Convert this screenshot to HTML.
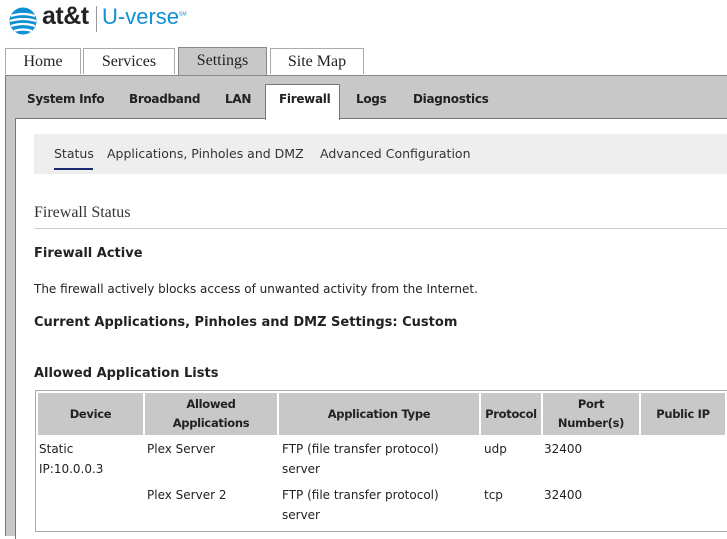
<!DOCTYPE html>
<html><head><style>
body{margin:0;width:727px;height:532px;overflow:hidden;background:#fff;font-family:"DejaVu Sans","Liberation Sans",sans-serif;position:relative;color:#222}
.a{position:absolute}
.tab{position:absolute;top:48px;height:26px;border:1px solid #aaa;border-bottom:none;background:#fff;font-family:"Liberation Serif",serif;font-size:16px;text-align:center;line-height:26px;color:#222;box-sizing:border-box}
.st{position:absolute;top:92px;font-size:12px;font-weight:bold;color:#222;letter-spacing:-0.3px}
.b{font-size:13px;font-weight:bold;color:#222}
td,th{font-size:12px;text-align:left;vertical-align:top;padding:0 0 0 2px;line-height:20px;overflow:hidden}
th{text-align:center;vertical-align:middle;background:#c8c8c8;font-weight:bold;border-right:2px solid #fff;line-height:19px;padding:0;font-size:11.5px;letter-spacing:-0.3px}
</style></head><body>
<svg class="a" style="left:8px;top:6px" width="30" height="30" viewBox="0 0 30 30"><circle cx="15" cy="15" r="13.5" fill="#0f8fd4"/><g stroke="#fff" stroke-width="2.2" fill="none"><path d="M3 10q12-4 24 0M2 15q13-4 26 0M3 20q12-4 24 0M6 25q9-3 18 0"/></g></svg>
<div class="a" style="left:42px;top:2px;font-size:25px;font-weight:bold;color:#222;font-family:'Liberation Sans',sans-serif;letter-spacing:-0.5px">at&amp;t</div>
<div class="a" style="left:96px;top:6px;width:1px;height:26px;background:#999"></div>
<div class="a" style="left:102px;top:4px;font-size:22px;color:#0f8fd4;font-family:'Liberation Sans',sans-serif">U-verse<sup style="font-size:5px">SM</sup></div>
<div class="tab" style="left:5px;width:76px">Home</div>
<div class="tab" style="left:83px;width:92px">Services</div>
<div class="tab" style="left:178px;width:89px;top:47px;height:29px;background:#c8c8c8;border-color:#888">Settings</div>
<div class="tab" style="left:270px;width:94px">Site Map</div>
<div class="a" style="left:5px;top:75px;width:722px;height:460px;background:#c8c8c8;border-left:1px solid #777;border-top:1px solid #888"></div>
<div class="a" style="left:15px;top:118px;width:712px;height:420px;background:#fff;border-left:1px solid #777;border-top:1px solid #777"></div>
<div class="a" style="left:265px;top:84px;width:75px;height:36px;background:#fff;border:1px solid #777;border-bottom:none;box-sizing:border-box"></div>
<div class="st" style="left:27px">System Info</div>
<div class="st" style="left:129px">Broadband</div>
<div class="st" style="left:225px">LAN</div>
<div class="st" style="left:279px">Firewall</div>
<div class="st" style="left:356px">Logs</div>
<div class="st" style="left:413px">Diagnostics</div>
<div class="a" style="left:34px;top:134px;width:693px;height:40px;background:#eee"></div>
<div class="a" style="left:54px;top:146px;font-size:12.5px;color:#333">Status</div>
<div class="a" style="left:54px;top:168px;width:39px;height:2px;background:#1a2a6c"></div>
<div class="a" style="left:107px;top:146px;font-size:12.5px;color:#333">Applications, Pinholes and DMZ</div>
<div class="a" style="left:320px;top:146px;font-size:12.5px;color:#333">Advanced Configuration</div>
<div class="a" style="left:34px;top:204px;font-family:'Liberation Serif',serif;font-size:16px;color:#333">Firewall Status</div>
<div class="a" style="left:34px;top:228px;width:693px;height:1px;background:#ccc"></div>
<div class="a b" style="left:34px;top:246px">Firewall Active</div>
<div class="a" style="left:34px;top:282px;font-size:12px">The firewall actively blocks access of unwanted activity from the Internet.</div>
<div class="a b" style="left:34px;top:315px">Current Applications, Pinholes and DMZ Settings: Custom</div>
<div class="a b" style="left:34px;top:366px">Allowed Application Lists</div>
<div class="a" style="left:35px;top:390px;width:700px;height:142px;border:1px solid #aaa;box-sizing:border-box"></div>
<table class="a" style="left:38px;top:393px;border-collapse:collapse;width:689px;table-layout:fixed">
<tr style="height:42px"><th style="width:105px">Device</th><th style="width:132px">Allowed<br>Applications</th><th style="width:200px">Application Type</th><th style="width:60px">Protocol</th><th style="width:96px">Port<br>Number(s)</th><th>Public IP</th></tr>
<tr style="height:46px"><td style="padding-top:4px;padding-left:1px">Static<br>IP:10.0.0.3</td><td style="padding-top:4px;padding-left:3px">Plex Server</td><td style="padding-top:4px;padding-left:4px">FTP (file transfer protocol)<br>server</td><td style="padding-top:4px;padding-left:4px">udp</td><td style="padding-top:4px;padding-left:2px">32400</td><td></td></tr>
<tr style="height:46px"><td style="padding-top:4px"></td><td style="padding-top:4px;padding-left:3px">Plex Server 2</td><td style="padding-top:4px;padding-left:4px">FTP (file transfer protocol)<br>server</td><td style="padding-top:4px;padding-left:4px">tcp</td><td style="padding-top:4px;padding-left:2px">32400</td><td></td></tr>
</table>
</body></html>
